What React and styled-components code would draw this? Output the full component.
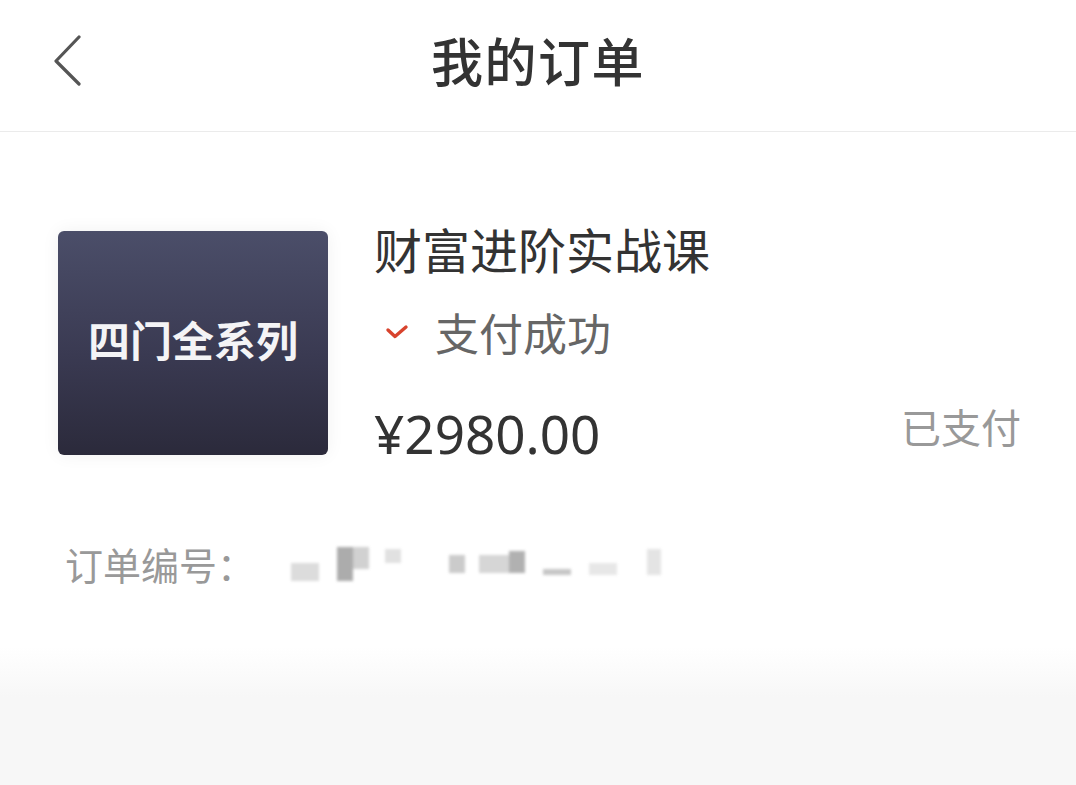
import styled, { createGlobalStyle } from "styled-components";

const GlobalStyle = createGlobalStyle`
    html, body {
        margin: 0;
        padding: 0;
        background: #f7f7f7;
        font-family: "Noto Sans CJK SC", "Noto Sans", sans-serif;
    }
`;

const Page = styled.div`
    width: 1076px;
    min-height: 785px;
    display: flex;
    flex-direction: column;
`;

const NavBar = styled.header`
    height: 132px;
    box-sizing: border-box;
    padding: 0 0 12px 0;
    display: grid;
    grid-template-columns: 1fr auto 1fr;
    align-items: center;
    background: #fff;
    border-bottom: 1px solid #ebebeb;
`;

const BackButton = styled.button`
    justify-self: start;
    margin-left: 52px;
    padding: 0;
    border: none;
    background: none;
    display: flex;
    color: #555;
`;

const Title = styled.h1`
    margin: 0;
    font-size: 52px;
    font-weight: 500;
    color: #333;
    letter-spacing: 1.5px;
`;

const Card = styled.section`
    background: #fff;
    padding: 86px 55px 58px 58px;
`;

const Row = styled.div`
    display: flex;
    align-items: flex-start;
    gap: 46px;
`;

const Cover = styled.div`
    flex: none;
    width: 270px;
    height: 224px;
    margin-top: 13px;
    border-radius: 6px;
    background: linear-gradient(180deg, #4b4e69 0%, #3a3a52 55%, #2b2a3b 100%);
    box-shadow: 0 0 18px rgba(0, 0, 0, 0.06);
    display: flex;
    align-items: center;
    justify-content: center;
    color: #f4f4f6;
    font-size: 42px;
    font-weight: 700;
    padding-bottom: 10px;
    box-sizing: border-box;
`;

const Info = styled.div`
    flex: 1;
    display: flex;
    flex-direction: column;
`;

const CourseName = styled.div`
    font-size: 48px;
    line-height: 60px;
    color: #333;
`;

const Status = styled.div`
    margin-top: 26px;
    display: flex;
    align-items: center;
    gap: 26px;
    padding-left: 11px;
    font-size: 44px;
    line-height: 56px;
    color: #666;
`;

const PriceRow = styled.div`
    margin-top: 38px;
    display: flex;
    align-items: center;
    justify-content: space-between;
`;

const Price = styled.div`
    font-family: "Noto Sans", sans-serif;
    font-size: 53px;
    line-height: 60px;
    color: #333;
`;

const Paid = styled.div`
    font-size: 40px;
    line-height: 56px;
    color: #999;
    margin-bottom: 16px;
`;

const OrderNo = styled.div`
    margin-top: 69px;
    padding-left: 7px;
    display: flex;
    align-items: center;
    font-size: 38px;
    line-height: 50px;
    color: #999;
`;

const Mosaic = styled.div`
    margin-left: 36px;
    display: flex;
    align-items: flex-end;
    filter: blur(1.5px);
    opacity: 0.85;
`;

const Tile = styled.span`
    display: block;
    width: ${(p) => p.$w}px;
    height: ${(p) => p.$h}px;
    margin-right: ${(p) => p.$gap || 0}px;
    margin-bottom: ${(p) => p.$lift || 0}px;
    background: ${(p) => p.$c};
`;

const Fade = styled.div`
    height: 50px;
    background: linear-gradient(180deg, #fff 0%, #f7f7f7 100%);
`;

const tiles = [
    { w: 28, h: 18, c: "#d6d6d6", gap: 18 },
    { w: 16, h: 34, c: "#9e9e9e", gap: 0 },
    { w: 16, h: 22, c: "#c9c9c9", gap: 16, lift: 12 },
    { w: 16, h: 14, c: "#dcdcdc", gap: 48, lift: 18 },
    { w: 16, h: 18, c: "#c2c2c2", gap: 14, lift: 8 },
    { w: 30, h: 18, c: "#cfcfcf", gap: 0, lift: 8 },
    { w: 16, h: 22, c: "#a4a4a4", gap: 18, lift: 8 },
    { w: 28, h: 6, c: "#bdbdbd", gap: 18, lift: 6 },
    { w: 28, h: 12, c: "#e3e3e3", gap: 30, lift: 6 },
    { w: 14, h: 26, c: "#e0e0e0", gap: 0, lift: 6 },
];

const App = () => {
    return (
        <>
            <GlobalStyle />
            <Page>
                <NavBar>
                    <BackButton aria-label="返回">
                        <svg width="30" height="52" viewBox="0 0 30 52" fill="none">
                            <path d="M27 3 L4 27 L27 50" stroke="#555" strokeWidth="3.2" strokeLinecap="round" strokeLinejoin="round" />
                        </svg>
                    </BackButton>
                    <Title>我的订单</Title>
                    <div />
                </NavBar>
                <Card>
                    <Row>
                        <Cover>四门全系列</Cover>
                        <Info>
                            <CourseName>财富进阶实战课</CourseName>
                            <Status>
                                <svg width="24" height="16" viewBox="0 0 24 16" fill="none">
                                    <path d="M3 6 L10 12.5 L21 3" stroke="#d8432d" strokeWidth="3.4" strokeLinecap="round" strokeLinejoin="round" />
                                </svg>
                                支付成功
                            </Status>
                            <PriceRow>
                                <Price>¥2980.00</Price>
                                <Paid>已支付</Paid>
                            </PriceRow>
                        </Info>
                    </Row>
                    <OrderNo>
                        订单编号：
                        <Mosaic>
                            {tiles.map((t, i) => (
                                <Tile key={i} $w={t.w} $h={t.h} $c={t.c} $gap={t.gap} $lift={t.lift} />
                            ))}
                        </Mosaic>
                    </OrderNo>
                </Card>
                <Fade />
            </Page>
        </>
    );
};

export default App;
